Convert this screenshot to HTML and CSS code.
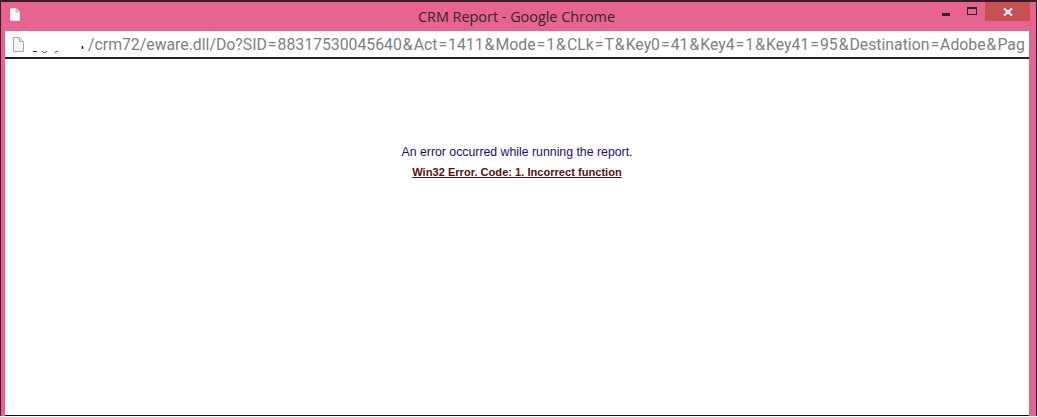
FILE: index.html
```html
<!doctype html>
<html lang="en">
<head>
  <meta charset="UTF-8">
  <title>CRM Report - Google Chrome</title>
  <link rel="stylesheet" href="styles.css">
</head>
<body>
  <div class="window">
    <div class="titlebar">
      <svg class="title-icon" width="10" height="13" viewBox="0 0 10 13">
        <path d="M0.5 0.5H6L9.5 4V12.5H0.5Z" fill="#fff" stroke="#f3e3e8"/>
        <path d="M6 0.5V4H9.5" fill="#e9c6d2" stroke="#d8a8ba"/>
      </svg>
      <div class="title">CRM Report - Google Chrome</div>
      <div class="controls">
        <div class="ctl ctl-min"><span class="min-bar"></span></div>
        <div class="ctl ctl-max"><span class="max-box"></span></div>
        <div class="ctl ctl-close">
          <svg width="10" height="10" viewBox="0 0 10 10">
            <path d="M1 1.5L9 8.5M9 1.5L1 8.5" stroke="#fff" stroke-width="2"/>
          </svg>
        </div>
      </div>
    </div>
    <div class="addressbar">
      <svg class="page-icon" width="11" height="15" viewBox="0 0 11 15">
        <path d="M0.5 0.5H6.5L10.5 4.5V14.5H0.5Z" fill="#f4f4f4" stroke="#a8a8a8"/>
        <path d="M6.5 0.5V4.5H10.5" fill="#e4e4e4" stroke="#a8a8a8"/>
      </svg>
      <svg class="smudge" width="56" height="20" viewBox="0 0 56 20">
        <path d="M1 17.5H5M10 17C11 19 14 19 15 17M23 18.5L26 17" stroke="#333" fill="none"/>
        <path d="M50.5 12V15" stroke="#222" stroke-width="1.5"/>
      </svg>
      <div class="url">/crm72/eware.dll/Do?SID<span class="sep">=</span>88317530045640<span class="sep">&amp;</span>Act<span class="sep">=</span>1411<span class="sep">&amp;</span>Mode<span class="sep">=</span>1<span class="sep">&amp;</span>CLk<span class="sep">=</span>T<span class="sep">&amp;</span>Key0<span class="sep">=</span>41<span class="sep">&amp;</span>Key4<span class="sep">=</span>1<span class="sep">&amp;</span>Key41<span class="sep">=</span>95<span class="sep">&amp;</span>Destination<span class="sep">=</span>Adobe<span class="sep">&amp;</span>Pag</div>
    </div>
    <div class="content">
      <p class="msg">An error occurred while running the report.</p>
      <p class="err">Win32 Error. Code: 1. Incorrect function</p>
    </div>
  </div>
</body>
</html>
```

FILE: styles.css
```css
html, body {
    margin: 0;
    height: 100%;
    background: #fff;
}

.window {
    height: 416px;
    display: flex;
    flex-direction: column;
    margin-right: 1px;
    padding: 0 7px 0 4px;
    background: #e6648f;
    border: 1px solid #3a1a26;
    border-bottom: 0;
    border-top-width: 2px;
    box-sizing: border-box;
    font-family: "Liberation Sans", Arial, sans-serif;
}

.titlebar {
    position: relative;
    height: 29px;
    display: flex;
    align-items: center;
    justify-content: center;
    flex-shrink: 0;
}

.title-icon {
    position: absolute;
    left: 5px;
    top: 6px;
}

.title {
    font-size: 14.4px;
    color: #33262b;
    margin-left: -1px;
    font-family: "Open Sans", sans-serif;
}

.controls {
    position: absolute;
    right: -1px;
    top: 0;
    display: flex;
}

.ctl {
    height: 19px;
    display: flex;
    align-items: center;
    justify-content: center;
}

.ctl-min {
    width: 32px;
}

.min-bar {
    width: 8px;
    height: 3px;
    margin: 6px 0 0 7px;
    background: #3a2028;
}

.ctl-max {
    width: 27px;
}

.max-box {
    width: 8px;
    height: 5px;
    margin-top: -2px;
    border: 1px solid #3a2028;
    border-top-width: 2px;
}

.ctl-close {
    width: 45px;
    background: #c75050;
}

.addressbar {
    height: 26px;
    display: flex;
    align-items: center;
    flex-shrink: 0;
    background: #fff;
    border-bottom: 2px solid #222;
}

.page-icon {
    margin-left: 8px;
    flex-shrink: 0;
}

.smudge {
    margin-left: 8px;
    flex-shrink: 0;
}

.url {
    font-family: Roboto, sans-serif;
    font-size: 15.8px;
    color: #808080;
    white-space: nowrap;
}

.sep {
    padding: 0 1px;
}

.content {
    flex: 1;
    background: #fff;
    border-bottom: 1px solid #111;
    padding-top: 86px;
    text-align: center;
}

.msg {
    margin: 0;
    font-size: 12.3px;
    color: #1a1070;
}

.err {
    margin: 7px 0 0;
    font-size: 11.1px;
    font-weight: bold;
    color: #5a0f14;
    text-decoration: underline;
}
```
